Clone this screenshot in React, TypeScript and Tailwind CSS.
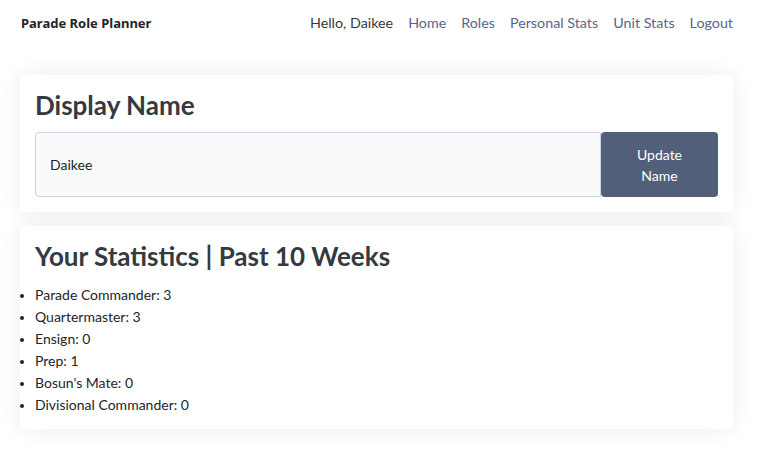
import React from "react";

const stats = [
  ["Parade Commander", 3],
  ["Quartermaster", 3],
  ["Ensign", 0],
  ["Prep", 1],
  ["Bosun's Mate", 0],
  ["Divisional Commander", 0],
];

export default function App() {
  return (
    <div className="min-h-[452px] bg-white text-[#343a40]" style={{ fontFamily: 'Lato, "Noto Sans", sans-serif' }}>
      <header className="flex items-baseline justify-between px-[21px] pt-[12px] h-[44px]">
        <div className="text-[13px] font-bold text-[#212529]" style={{ fontFamily: '"Noto Sans", sans-serif' }}>Parade Role Planner</div>
        <nav className="flex items-baseline gap-[15px] text-[14.3px] pr-[12px]">
          <span className="text-[#343a40]">Hello, Daikee</span>
          <a className="text-[#5b6586]">Home</a>
          <a className="text-[#5b6586]">Roles</a>
          <a className="text-[#5b6586]">Personal Stats</a>
          <a className="text-[#5b6586]">Unit Stats</a>
          <a className="text-[#5b6586]">Logout</a>
        </nav>
      </header>
      <main className="px-[20px] pt-[31px] pr-[33px] flex flex-col gap-[14px]">
        <section className="bg-white rounded-[4px] shadow-[0_0_24px_rgba(30,40,90,0.08)] px-[15px] pt-[14px] pb-[15px]">
          <h2 className="text-[26px] font-bold leading-[32px] text-[#343a40] mb-[11px]">Display Name</h2>
          <div className="flex h-[65px]">
            <div className="flex-1 border border-[#cdd1e0] rounded-l-[4px] bg-[#f9fafb] flex items-center pl-[14px] text-[14px] text-[#212529]">Daikee</div>
            <button className="w-[117px] bg-[#525f7a] text-white rounded-[4px] text-[14px] leading-[21px] px-[30px]">Update Name</button>
          </div>
        </section>
        <section className="bg-white rounded-[4px] shadow-[0_0_24px_rgba(30,40,90,0.08)] px-[15px] pt-[14px] pb-[13px]">
          <h2 className="text-[26px] font-bold leading-[32px] text-[#343a40] mb-[12px]">Your Statistics | Past 10 Weeks</h2>
          <ul className="list-disc text-[14px] leading-[22px] text-[#212529] marker:text-[13px]">
            {stats.map(([k, v]) => (
              <li key={k as string}>{k}: {v}</li>
            ))}
          </ul>
        </section>
      </main>
    </div>
  );
}
